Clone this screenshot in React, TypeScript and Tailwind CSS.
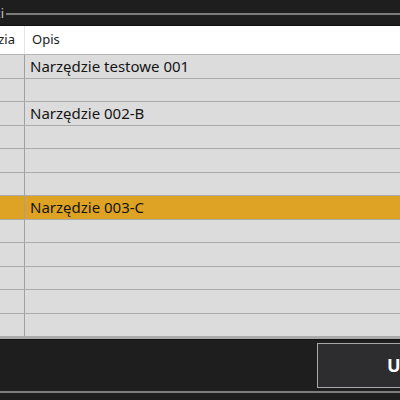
import React from "react";

const rows: { text: string; h: string; sel?: boolean }[] = [
  { text: "Narzędzie testowe 001", h: "h-[24px]" },
  { text: "", h: "h-[23px]" },
  { text: "Narzędzie 002-B", h: "h-[24px]" },
  { text: "", h: "h-[23px]" },
  { text: "", h: "h-[24px]" },
  { text: "", h: "h-[23px]" },
  { text: "Narzędzie 003-C", h: "h-[24px]", sel: true },
  { text: "", h: "h-[23px]" },
  { text: "", h: "h-[24px]" },
  { text: "", h: "h-[23px]" },
  { text: "", h: "h-[24px]" },
  { text: "", h: "h-[23px]" },
];

export default function App() {
  return (
    <div
      className="w-[400px] h-[400px] bg-[#1e1e1e] overflow-hidden flex flex-col"
      style={{ fontFamily: '"Noto Sans", "Open Sans", sans-serif' }}
    >
      {/* group box title line */}
      <div className="h-[25px] flex items-start pt-[5px] shrink-0">
        <div className="w-[4px] overflow-hidden flex justify-end">
          <span className="whitespace-nowrap text-[13px] leading-[16px] text-[#c8c8c8]">Narzędzi</span>
        </div>
        <div className="flex-1 h-[2px] mt-[8px] ml-[2px] bg-[#7c7c7c]" />
      </div>
      <div className="h-[1px] bg-[#101010] shrink-0" />

      {/* table */}
      <div className="flex flex-col shrink-0">
        <div className="h-[29px] bg-white border-b border-[#b4b4b4] flex text-[13px] text-[#1a1a1a]">
          <div className="w-[25px] border-r border-[#e4e4e4] flex items-center justify-end overflow-hidden">
            <span className="whitespace-nowrap pr-[9px]">Narzędzia</span>
          </div>
          <div className="flex-1 flex items-center pl-[7px]">Opis</div>
        </div>
        {rows.map((r, i) => (
          <div
            key={i}
            className={`${r.h} flex border-b border-[#ababab] text-[15px] text-[#151515] ${
              r.sel ? "bg-[#dea324]" : "bg-[#dcdcdc]"
            }`}
          >
            <div className="w-[25px] border-r border-[#a0a0a0]" />
            <div className="flex-1 flex items-center pl-[5px] whitespace-nowrap">{r.text}</div>
          </div>
        ))}
        <div className="h-[2px] bg-[#a9a9a9]" />
        <div className="h-[1px] bg-[#111111]" />
      </div>

      {/* bottom panel */}
      <div className="flex justify-end pt-[3px] shrink-0">
        <button className="w-[100px] h-[45px] -mr-[17px] border border-[#a8a8a8] bg-[#2d2d30] text-white font-bold text-[18px] text-left pl-[69px] whitespace-nowrap overflow-hidden">
          Usuń
        </button>
      </div>
      <div className="h-[2px] mt-[3px] bg-[#7c7c7c] shrink-0" />
    </div>
  );
}
